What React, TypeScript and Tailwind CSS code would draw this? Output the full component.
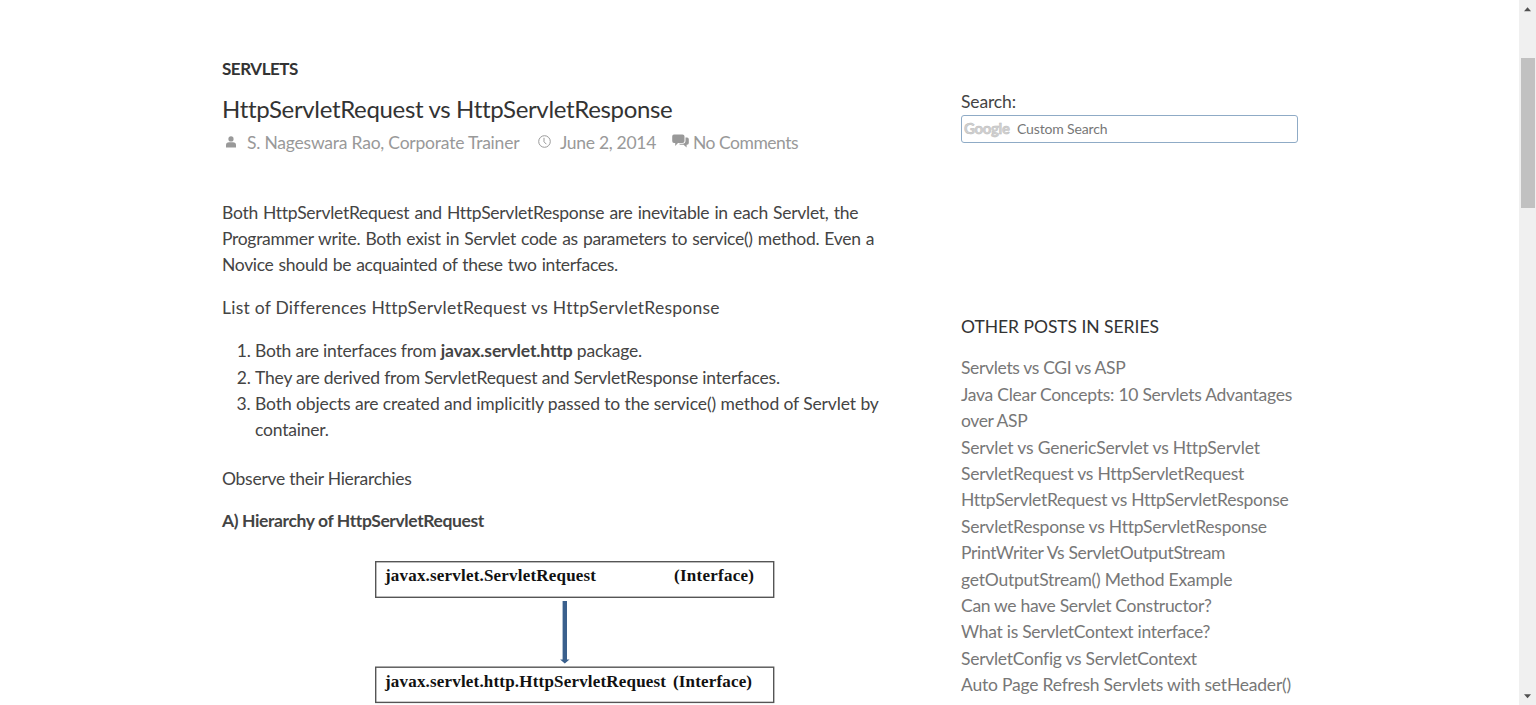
import { clsx } from 'clsx';

type Line = { text: string; track: string };

const intro: Line[] = [
  { text: 'Both HttpServletRequest and HttpServletResponse are inevitable in each Servlet, the', track: 'tracking-[-0.27px] [word-spacing:0.9px]' },
  { text: 'Programmer write. Both exist in Servlet code as parameters to service() method. Even a', track: 'tracking-[-0.29px] [word-spacing:0.9px]' },
  { text: 'Novice should be acquainted of these two interfaces.', track: 'tracking-[-0.32px] [word-spacing:0.9px]' },
];

const posts: Line[] = [
  { text: 'Servlets vs CGI vs ASP', track: 'tracking-[-0.33px]' },
  { text: 'Java Clear Concepts: 10 Servlets Advantages', track: 'tracking-[-0.26px]' },
  { text: 'over ASP', track: 'tracking-[-0.4px]' },
  { text: 'Servlet vs GenericServlet vs HttpServlet', track: 'tracking-[-0.18px]' },
  { text: 'ServletRequest vs HttpServletRequest', track: 'tracking-[-0.25px]' },
  { text: 'HttpServletRequest vs HttpServletResponse', track: 'tracking-[-0.27px]' },
  { text: 'ServletResponse vs HttpServletResponse', track: 'tracking-[-0.23px]' },
  { text: 'PrintWriter Vs ServletOutputStream', track: 'tracking-[-0.34px]' },
  { text: 'getOutputStream() Method Example', track: 'tracking-[-0.22px]' },
  { text: 'Can we have Servlet Constructor?', track: 'tracking-[-0.31px]' },
  { text: 'What is ServletContext interface?', track: 'tracking-[-0.28px]' },
  { text: 'ServletConfig vs ServletContext', track: 'tracking-[-0.27px]' },
  { text: 'Auto Page Refresh Servlets with setHeader()', track: 'tracking-[-0.21px]' },
  { text: 'Servlet Code Client Servlet to Web', track: 'tracking-[-0.22px]' },
];

function Lines({ lines }: { lines: Line[] }) {
  return (
    <>
      {lines.map((l) => (
        <span key={l.text} className={clsx('block whitespace-nowrap', l.track)}>{l.text}</span>
      ))}
    </>
  );
}

function UserIcon() {
  return (
    <svg className="ml-1 mt-[6px] h-[13px] w-[10px] shrink-0" viewBox="0 0 10 13" fill="#999">
      <circle cx="5" cy="2.9" r="2.6" />
      <path d="M0 11.5V9C0 7.2 1.2 6.2 3 6.2h4C8.800 6.200 10 7.2 10 9v2.500z" />
    </svg>
  );
}

function ClockIcon() {
  return (
    <svg className="ml-[18px] mt-[5px] h-[13px] w-[13px] shrink-0" viewBox="0 0 13 13" fill="none" stroke="#999">
      <circle cx="6.5" cy="6.5" r="5.8" />
      <path d="M6 2.8v4l2.4 2.4" />
    </svg>
  );
}

function CommentsIcon() {
  return (
    <svg className="ml-4 mt-[4px] h-[15px] w-[17px] shrink-0" viewBox="0 0 17 15" fill="#999">
      <path d="M2 .5h8.500q2 0 2 2v4.500q0 2-2 2H6L3.200 12V9H2Q.2 9 .2 7V2.500Q.2.5 2 .5z" />
      <path d="M13.500 3.500h1.500q1.800 0 1.800 1.800v3.700q0 1.800-1.800 1.800h-.4v2.700l-3-2.700H8.600q-1.200 0-1.500-1h3.400q3 0 3-3z" />
    </svg>
  );
}

function Hierarchy() {
  return (
    <svg
      className="ml-[152px] mt-[24px] block h-[146px] w-[402px] font-['Liberation_Serif',serif] text-[17px] font-bold"
      viewBox="0 0 402 146"
      fill="#111"
    >
      <rect x="1.7" y="2.7" width="398" height="35.6" fill="#fff" stroke="#555" strokeWidth="1.4" />
      <text x="11" y="22.300" textLength="211">javax.servlet.ServletRequest</text>
      <text x="300" y="22.300" textLength="80">(Interface)</text>
      <path d="M188.6 42h4.4v58.5h2.5l-4.7 4-4.7-4h2.5z" fill="#3a608d" />
      <rect x="1.7" y="108.2" width="398" height="35.2" fill="#fff" stroke="#555" strokeWidth="1.4" />
      <text x="11" y="127.500" textLength="281">javax.servlet.http.HttpServletRequest</text>
      <text x="299" y="127.500" textLength="79">(Interface)</text>
    </svg>
  );
}

function ScrollBar() {
  return (
    <div className="flex h-full w-[17px] shrink-0 flex-col items-center bg-[#f0f0f0]">
      <svg className="h-[58px] w-[17px] shrink-0" viewBox="0 0 17 58" fill="#505050"><path d="M5 11.2 8.5 7.2l3.5 4z" /></svg>
      <div className="h-[150px] w-[14px] bg-[#c1c1c1]" />
      <div className="grow" />
      <svg className="h-[17px] w-[17px] shrink-0" viewBox="0 0 17 17" fill="#505050"><path d="M5 6.2h7l-3.5 4z" /></svg>
    </div>
  );
}

export default function App() {
  return (
    <div className="flex h-[705px] w-[1536px] overflow-hidden bg-white font-['Lato',sans-serif] text-[17.5px] leading-[26.4px] text-[#444]">
      <div className="flex h-full grow overflow-hidden pl-[222px]">
        <main className="w-[739px] shrink-0 whitespace-nowrap pt-14">
          <div className="text-[17px] font-bold tracking-[-0.45px] text-[#333]">SERVLETS</div>
          <h1 className="mt-[11px] text-[24px] leading-[32px] tracking-[-0.34px] text-[#333]">HttpServletRequest vs HttpServletResponse</h1>
          <div className="mt-[5px] flex text-[#999]">
            <UserIcon />
            <span className="ml-[11px] w-[273px] tracking-[-0.22px]">S. Nageswara Rao, Corporate Trainer</span>
            <ClockIcon />
            <span className="ml-[9px] w-[96px] tracking-[-0.3px]">June 2, 2014</span>
            <CommentsIcon />
            <span className="ml-1 tracking-[-0.48px]">No Comments</span>
          </div>
          <p className="mt-[42.7px]"><Lines lines={intro} /></p>
          <h2 className="mt-[16.5px] tracking-[0.24px]">List of Differences HttpServletRequest vs HttpServletResponse</h2>
          <ol className="mt-[16.5px] list-decimal pl-[33px]">
            <li className="tracking-[-0.2px]">Both are interfaces from <b className="tracking-[-0.13px]">javax.servlet.http</b> package.</li>
            <li className="tracking-[-0.19px]">They are derived from ServletRequest and ServletResponse interfaces.</li>
            <li className="tracking-[-0.11px]">Both objects are created and implicitly passed to the service() method of Servlet by<br /><span className="tracking-[-0.2px]">container.</span></li>
          </ol>
          <p className="mt-[22px] tracking-[-0.26px]">Observe their Hierarchies</p>
          <p className="mt-4 font-bold tracking-[-0.39px]">A) Hierarchy of HttpServletRequest</p>
          <Hierarchy />
        </main>
        <aside className="w-[337px] shrink-0 pt-[89px]">
          <div className="tracking-[-0.13px]">Search:</div>
          <div className="flex h-7 items-center rounded-[3px] border border-[#8fabc6] text-[14px] leading-[26px]">
            <svg className="ml-[2px] h-[22px] w-12 shrink-0" viewBox="0 0 48 22" fill="#d2d2d2" stroke="#bbb" strokeWidth=".5">
              <text x="0" y="16" textLength="46" className="font-['Lato',sans-serif] text-[15px] font-bold">Google</text>
            </svg>
            <span className="ml-[5px] tracking-[-0.15px] text-[#777]">Custom Search</span>
          </div>
          <h3 className="mt-[171px] tracking-[-0.04px] text-[#333]">OTHER POSTS IN SERIES</h3>
          <div className="mt-[14.6px] text-[#777]"><Lines lines={posts} /></div>
        </aside>
      </div>
      <ScrollBar />
    </div>
  );
}
